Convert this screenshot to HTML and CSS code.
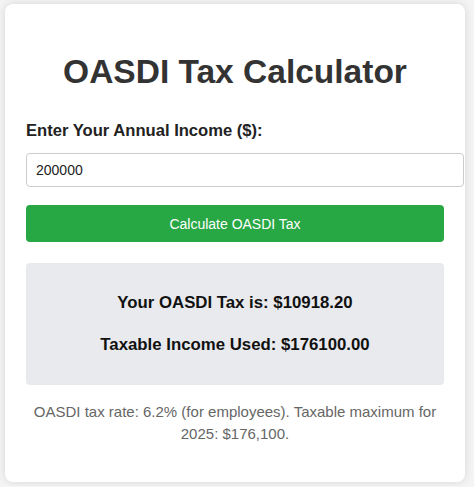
FILE: index.html
```html
<!DOCTYPE html>
<html lang="en">
<head>
    <meta charset="UTF-8">
    <meta name="viewport" content="width=device-width, initial-scale=1.0">
    <title>OASDI Tax Calculator</title>
    <link rel="stylesheet" href="styles.css">
</head>
<body>
    <div class="container">
        <h1>OASDI Tax Calculator</h1>
        <label for="income">Enter Your Annual Income ($):</label>
        <input type="number" id="income" value="200000">
        <button onclick="calculateTax()">Calculate OASDI Tax</button>
        <div class="result" id="result">
            <p>Your OASDI Tax is: $10918.20</p>
            <p>Taxable Income Used: $176100.00</p>
        </div>
        <p class="note">OASDI tax rate: 6.2% (for employees). Taxable maximum for 2025: $176,100.</p>
    </div>
    <script>
        // Ставка и потолок облагаемого дохода на 2025 год
        const RATE = 0.062;
        const WAGE_BASE = 176100;

        function calculateTax() {
            let income = parseFloat(document.getElementById('income').value) || 0;
            let taxable = Math.min(income, WAGE_BASE);
            let tax = taxable * RATE;
            document.getElementById('result').innerHTML =
                '<p>Your OASDI Tax is: $' + tax.toFixed(2) + '</p>' +
                '<p>Taxable Income Used: $' + taxable.toFixed(2) + '</p>';
        }
    </script>
</body>
</html>
```

FILE: styles.css
```css
body {
    margin: 0;
    padding: 4px 5px;
    font-family: "Liberation Sans", Arial, sans-serif;
    background-color: #f4f4f4;
}

.container {
    width: 460px;
    box-sizing: border-box;
    padding: 20px 21px 37px;
    background-color: #fff;
    border-radius: 8px;
    box-shadow: 0 0 8px rgba(0, 0, 0, 0.12);
}

h1 {
    margin: 29px 0 32px;
    font-size: 33.5px;
    line-height: 37px;
    text-align: center;
    color: #333;
}

label {
    display: block;
    margin-bottom: 13px;
    font-size: 16.6px;
    line-height: 18px;
    font-weight: bold;
    color: #222;
}

input {
    display: block;
    width: 100%;
    margin: 0 0 18px;
    padding: 8px 9px;
    font-family: inherit;
    font-size: 14px;
    line-height: 16px;
    color: #222;
    border: 1px solid #ccc;
    border-radius: 4px;
    outline: none;
}

input::-webkit-outer-spin-button,
input::-webkit-inner-spin-button {
    -webkit-appearance: none;
    margin: 0;
}

button {
    display: block;
    width: 100%;
    height: 37px;
    padding: 0;
    font-family: inherit;
    font-size: 14px;
    color: #fff;
    background-color: #28a745;
    border: none;
    border-radius: 4px;
    cursor: pointer;
}

button:hover {
    background-color: #218838;
}

.result {
    margin-top: 21px;
    padding: 10px;
    background-color: #e9eaee;
    border-radius: 4px;
    text-align: center;
}

.result p {
    margin: 18px 0;
    font-size: 16.8px;
    line-height: 24px;
    font-weight: bold;
    color: #111;
}

.note {
    margin: 16px 0 0;
    font-size: 15px;
    line-height: 22px;
    text-align: center;
    color: #666;
}
```
